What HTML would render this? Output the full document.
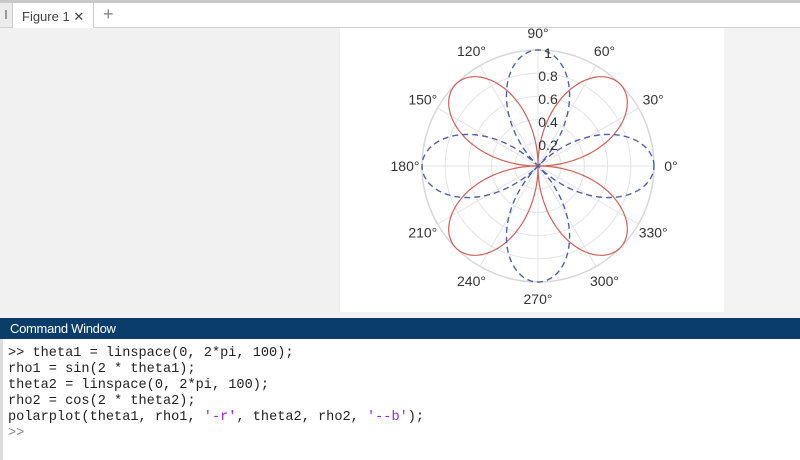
<!DOCTYPE html>
<html><head><style>
body{margin:0;width:800px;height:460px;overflow:hidden;background:#fff;font-family:"Liberation Sans",sans-serif;position:relative}
.abs{position:absolute}
.code{font-family:"Liberation Mono",monospace;font-size:13.6px;color:#222;line-height:16px;white-space:pre}
</style></head><body>
<div class="abs" style="left:0;top:0;width:800px;height:3px;background:#c8c8c8"></div>
<div class="abs" style="left:0;top:3px;width:800px;height:24px;background:#fff;border-bottom:1px solid #d0d0d0"></div>
<div class="abs" style="left:0;top:3px;width:12px;height:24px;background:#ececec"></div>
<div class="abs" style="left:5px;top:10px;width:2px;height:9px;background:#999"></div>
<div class="abs" style="left:12px;top:3px;width:80px;height:25px;background:#fff;border-left:1px solid #ccc;border-right:1px solid #ccc"></div>
<div class="abs" style="left:22px;top:9px;font-size:13px;color:#444">Figure 1 <span style="font-size:13px">✕</span></div>
<div class="abs" style="left:103px;top:4px;font-size:18px;color:#888">+</div>
<div class="abs" style="left:0;top:28px;width:340px;height:284px;background:#f1f1f1"></div>
<div class="abs" style="left:724px;top:28px;width:76px;height:284px;background:#f3f3f3"></div>
<div class="abs" style="left:0;top:312px;width:800px;height:6px;background:#f1f1f1"></div>
<svg class="abs" style="left:340px;top:28px" width="384" height="284" id="s"></svg>
<div class="abs" style="left:0;top:318px;width:800px;height:21px;background:#0b3d6b"></div>
<div class="abs" style="left:10px;top:321px;font-size:13px;color:#fff;letter-spacing:-0.3px">Command Window</div>
<div class="abs" style="left:0;top:339px;width:3px;height:121px;background:#ddd"></div>
<div class="abs code" style="left:8px;top:346px">&gt;&gt; theta1 = linspace(0, 2*pi, 100);
rho1 = sin(2 * theta1);
theta2 = linspace(0, 2*pi, 100);
rho2 = cos(2 * theta2);
polarplot(theta1, rho1, <span style="color:#a020f0">'-r'</span>, theta2, rho2, <span style="color:#a020f0">'--b'</span>);
<span style="color:#888">&gt;&gt;</span></div>
<script>
var s=document.getElementById('s'),cx=198,cy=138,R=116,h='';
for(var i=1;i<=5;i++)h+='<circle cx="'+cx+'" cy="'+cy+'" r="'+(R*i/5)+'" fill="none" stroke="#e4e4e4" stroke-width="1"/>';
for(var a=0;a<180;a+=30){var t=a*Math.PI/180;h+='<line x1="'+(cx-R*Math.cos(t))+'" y1="'+(cy+R*Math.sin(t))+'" x2="'+(cx+R*Math.cos(t))+'" y2="'+(cy-R*Math.sin(t))+'" stroke="#e4e4e4"/>';}
h+='<circle cx="'+cx+'" cy="'+cy+'" r="'+R+'" fill="none" stroke="#d8d8d8" stroke-width="1.5"/>';
function p(f){var d='';for(var k=0;k<=400;k++){var t=k/400*2*Math.PI,r=f(t)*R;d+=(k?'L':'M')+(cx+r*Math.cos(t)).toFixed(1)+' '+(cy-r*Math.sin(t)).toFixed(1);}return d;}
h+='<path d="'+p(function(t){return Math.sin(2*t)})+'" fill="none" stroke="#d0605a" stroke-width="1.2"/>';
h+='<path d="'+p(function(t){return Math.cos(2*t)})+'" fill="none" stroke="#5060a8" stroke-width="1.4" stroke-dasharray="6,4"/>';
var L=[[0,'0°'],[30,'30°'],[60,'60°'],[90,'90°'],[120,'120°'],[150,'150°'],[180,'180°'],[210,'210°'],[240,'240°'],[270,'270°'],[300,'300°'],[330,'330°']];
L.forEach(function(l){var t=l[0]*Math.PI/180,r=R+17;h+='<text x="'+(cx+r*Math.cos(t))+'" y="'+(cy-r*Math.sin(t)+5)+'" font-size="14" fill="#333" text-anchor="middle" font-family="Liberation Sans">'+l[1]+'</text>';});
[['0.2',24],['0.4',47],['0.6',70],['0.8',93],['1',116]].forEach(function(l){h+='<text x="'+(cx+10)+'" y="'+(cy-l[1]+8)+'" font-size="14" fill="#333" text-anchor="middle" font-family="Liberation Sans">'+l[0]+'</text>';});
s.innerHTML=h;
</script>
</body></html>
